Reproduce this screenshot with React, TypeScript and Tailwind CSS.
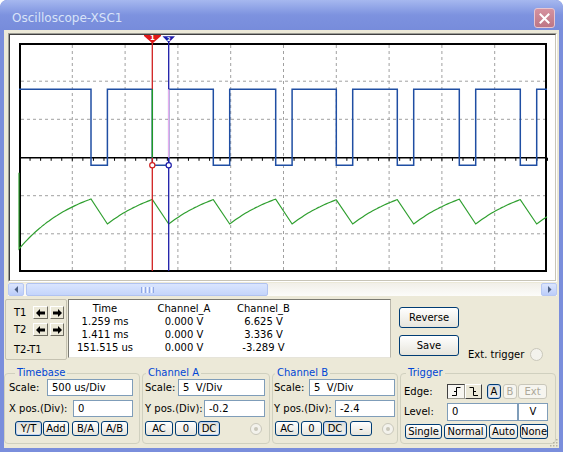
import React from "react";

const X0 = 19;
const X1 = 547;
const HI = 89.3;
const LO = 165.3;
const PULSES = [91, 152.3, 213.3, 275.7, 336.3, 397.3, 459.3, 520.3];
const PW = 16.4;

function squarePath(): string {
  let d = `M${X0} ${HI}`;
  for (const p of PULSES) d += ` H${p} V${LO} H${(p + PW).toFixed(1)} V${HI}`;
  return d + ` H${X1}`;
}

function sawPath(): string {
  let d = "M19 172.7 L19 249";
  const rise = (x0: number, y0: number, x1: number) => {
    for (let x = x0 + 2; x < x1; x += 2) {
      const y = 177.5 + (y0 - 177.5) * Math.exp(-(x - x0) / 60);
      d += ` L${x.toFixed(1)} ${y.toFixed(1)}`;
    }
    const y = 177.5 + (y0 - 177.5) * Math.exp(-(x1 - x0) / 60);
    d += ` L${x1.toFixed(1)} ${y.toFixed(1)}`;
  };
  rise(19, 249, PULSES[0]);
  PULSES.forEach((p, i) => {
    const e = p + PW;
    d += ` L${e.toFixed(1)} 224`;
    rise(e, 224, i + 1 < PULSES.length ? PULSES[i + 1] : X1);
  });
  return d;
}

const SQ = squarePath();
const SAW = sawPath();

function Scope() {
  const vx = Array.from({ length: 9 }, (_, i) => 19.5 + 52.8 * (i + 1));
  const hy = [81.2, 119.3, 195.7, 233.8];
  const ticks = Array.from({ length: 51 }, (_, i) => 19.5 + 10.56 * i);
  const rc = 152.3;
  const bc = 168.7;
  return (
    <svg width="545" height="245" viewBox="10 35 545 245" className="block">
      {vx.map((x) => (
        <line key={"v" + x} x1={x} y1={45} x2={x} y2={270} stroke="#a0a0a0" strokeWidth={1} strokeDasharray="3 3" />
      ))}
      {hy.map((y) => (
        <line key={"h" + y} x1={21} y1={y} x2={545} y2={y} stroke="#a0a0a0" strokeWidth={1} strokeDasharray="3 3" />
      ))}
      <line x1={19} y1={157.7} x2={547} y2={157.7} stroke="#000" strokeWidth={1.6} />
      {ticks.map((x) => (
        <line key={"t" + x} x1={x} y1={157.7} x2={x} y2={160.8} stroke="#000" strokeWidth={1} />
      ))}
      <rect x={20} y={44} width={526} height={227} fill="none" stroke="#000" strokeWidth={2} />
      <path d={SAW} fill="none" stroke="#2f9f2f" strokeWidth={1.2} />
      <path d={SQ} fill="none" stroke="#1f4ea3" strokeWidth={1.5} />
      <line x1={rc} y1={42} x2={rc} y2={HI} stroke="#d01f1f" strokeWidth={1.3} />
      <line x1={rc} y1={HI} x2={rc} y2={157.7} stroke="#1f9f1f" strokeWidth={1.3} />
      <line x1={rc} y1={157.7} x2={rc} y2={271} stroke="#d01f1f" strokeWidth={1.3} />
      <line x1={bc} y1={42} x2={bc} y2={HI} stroke="#1c1ca8" strokeWidth={1.3} />
      <line x1={bc} y1={HI} x2={bc} y2={157.7} stroke="#f2b4f2" strokeWidth={1.3} />
      <line x1={bc} y1={157.7} x2={bc} y2={271} stroke="#1c1ca8" strokeWidth={1.3} />
      <circle cx={rc} cy={LO} r={2.6} fill="#fff" stroke="#d01f1f" strokeWidth={1.2} />
      <circle cx={bc} cy={LO} r={2.6} fill="#fff" stroke="#1c1ca8" strokeWidth={1.2} />
      <polygon points="144,34 161,34 161,36 152.5,43.5 144,36" fill="#e01a1a" />
      <text x={152.5} y={40.3} fontSize={7} fontWeight="bold" fill="#fff" textAnchor="middle" fontFamily="DejaVu Sans, sans-serif">
        1
      </text>
      <polygon points="162.5,36.3 175,36.3 168.7,42.8" fill="#1c1ca8" />
      <text x={168.7} y={40.5} fontSize={5} fontWeight="bold" fill="#fff" textAnchor="middle" fontFamily="DejaVu Sans, sans-serif">
        2
      </text>
    </svg>
  );
}

function TitleBar() {
  return (
    <div className="h-[30px] shrink-0 flex items-center pl-[12px] pr-[8px] pt-[6px] rounded-t-[7px] bg-linear-to-b from-[#a6b8ef] via-[#7d92df] to-[#778cdb]">
      <span className="flex-1 text-[12px] leading-[14px] text-[#d9e3f8]">Oscilloscope-XSC1</span>
      <div className="w-[21px] h-[20px] rounded-[3px] border border-[#e8c6d0] bg-linear-to-b from-[#d5929f] to-[#bd7686] flex items-center justify-center">
        <svg width="11" height="11" viewBox="0 0 11 11">
          <path d="M1.5 1.5 L9.5 9.5 M9.5 1.5 L1.5 9.5" stroke="#ffffff" strokeWidth={2} strokeLinecap="square" />
        </svg>
      </div>
    </div>
  );
}

function ScopeFrame() {
  return (
    <div className="ml-[4px] mt-[3px] w-[549px] h-[249px] shrink-0 border border-t-[#9d9d95] border-l-[#9d9d95] border-r-[#ffffff] border-b-[#ffffff]">
      <div className="w-full h-full border border-t-[#404040] border-l-[#404040] border-r-[#c8c5b8] border-b-[#c8c5b8] bg-white">
        <Scope />
      </div>
    </div>
  );
}

function ScrollBtn({ dir }: { dir: "l" | "r" }) {
  return (
    <div className="w-[16px] h-full rounded-[2px] border border-[#b7c8f3] bg-linear-to-b from-[#dbe5fd] to-[#bccdf9] flex items-center justify-center">
      <svg width="5" height="7" viewBox="0 0 5 7">
        {dir === "l" ? <polygon points="4,0 4,7 0.5,3.5" fill="#4d6185" /> : <polygon points="1,0 1,7 4.5,3.5" fill="#4d6185" />}
      </svg>
    </div>
  );
}

function ScrollBar() {
  return (
    <div className="ml-[4px] mt-[1px] w-[549px] h-[13px] shrink-0 flex bg-linear-to-b from-[#f1efe8] to-[#fcfcfa]">
      <ScrollBtn dir="l" />
      <div className="ml-[2px] w-[242px] h-full rounded-[2px] border border-[#b1c3f0] bg-linear-to-b from-[#dae5fe] to-[#c4d5fb] flex items-center justify-center gap-[1px]">
        <span className="w-[1px] h-[6px] bg-[#8fa7e6]" />
        <span className="w-[1px] h-[6px] bg-[#f4f7ff]" />
        <span className="w-[1px] h-[6px] bg-[#8fa7e6]" />
        <span className="w-[1px] h-[6px] bg-[#f4f7ff]" />
        <span className="w-[1px] h-[6px] bg-[#8fa7e6]" />
        <span className="w-[1px] h-[6px] bg-[#f4f7ff]" />
        <span className="w-[1px] h-[6px] bg-[#8fa7e6]" />
      </div>
      <div className="flex-1" />
      <ScrollBtn dir="r" />
    </div>
  );
}

function ArrowBtn({ dir, className }: { dir: "l" | "r"; className: string }) {
  return (
    <div className={`h-full flex items-center justify-center bg-[#ece9d8] border border-t-[#ffffff] border-l-[#ffffff] border-r-[#716f64] border-b-[#716f64] ${className}`}>
      <svg width="9" height="8" viewBox="0 0 9 8">
        {dir === "l" ? (
          <path d="M0 4 L4 0 L4 2.5 L9 2.5 L9 5.5 L4 5.5 L4 8 Z" fill="#000" />
        ) : (
          <path d="M9 4 L5 0 L5 2.5 L0 2.5 L0 5.5 L5 5.5 L5 8 Z" fill="#000" />
        )}
      </svg>
    </div>
  );
}

function XBtn({ className, children, variant = "n" }: { className: string; children: React.ReactNode; variant?: "n" | "s" | "d" }) {
  const v =
    variant === "d"
      ? "border-[#c9c7ba] text-[#aca899] bg-[#f6f5ef]"
      : variant === "s"
      ? "border-[#003c74] bg-linear-to-b from-[#e2e0d4] to-[#f3f2ec] shadow-[inset_0_0_0_1px_#c3d3f3]"
      : "border-[#003c74] bg-linear-to-b from-[#ffffff] to-[#e7e5dc]";
  return (
    <div className={`flex items-center justify-center rounded-[3px] border whitespace-nowrap ${v} ${className}`}>{children}</div>
  );
}

function Field({ className, children, center }: { className: string; children: React.ReactNode; center?: boolean }) {
  return (
    <div
      className={`h-full flex items-center border border-[#7f9db9] bg-white whitespace-pre ${center ? "justify-center" : "pl-[4px]"} ${className}`}
    >
      {children}
    </div>
  );
}

function Radio({ dot, className }: { dot?: boolean; className: string }) {
  return (
    <div className={`rounded-full border border-[#c9c7ba] bg-[#f3f2ec] flex items-center justify-center ${className}`}>
      {dot ? <div className="w-[4px] h-[4px] rounded-full bg-[#c9c7ba]" /> : null}
    </div>
  );
}

function ReadoutRow() {
  const rows = [
    ["Time", "Channel_A", "Channel_B"],
    ["1.259 ms", "0.000 V", "6.625 V"],
    ["1.411 ms", "0.000 V", "3.336 V"],
    ["151.515 us", "0.000 V", "-3.289 V"],
  ];
  return (
    <div className="mt-[3px] h-[61px] shrink-0 flex items-start">
      <div className="ml-[1px] w-[62px] h-[61px] border border-[#c5c2b1] rounded-[2px] flex flex-col pl-[8px]">
        <div className="mt-[6px] h-[13px] flex items-center">
          <span className="w-[19px]">T1</span>
          <ArrowBtn dir="l" className="w-[15px]" />
          <ArrowBtn dir="r" className="ml-[2px] w-[14px]" />
        </div>
        <div className="mt-[4px] h-[13px] flex items-center">
          <span className="w-[19px]">T2</span>
          <ArrowBtn dir="l" className="w-[15px]" />
          <ArrowBtn dir="r" className="ml-[2px] w-[14px]" />
        </div>
        <div className="mt-[8px] h-[12px] flex items-center">T2-T1</div>
      </div>
      <div className="ml-[1px] w-[323px] h-[59px] bg-white border border-t-[#7a7a72] border-l-[#7a7a72] border-r-[#b9b7ab] border-b-[#e6e4da] pt-[2px]">
        {rows.map((r, i) => (
          <div key={i} className="grid grid-cols-[72px_86px_73px] leading-[13px]">
            <span className="text-center whitespace-nowrap">{r[0]}</span>
            <span className="text-center whitespace-nowrap">{r[1]}</span>
            <span className="text-center whitespace-nowrap">{r[2]}</span>
          </div>
        ))}
      </div>
      <div className="ml-[8px] w-[60px] flex flex-col">
        <XBtn className="mt-[8px] w-[60px] h-[21px]">Reverse</XBtn>
        <XBtn className="mt-[7px] w-[60px] h-[21px]">Save</XBtn>
      </div>
      <div className="ml-[9px] mt-[49px] h-[13px] flex items-center">
        <span>Ext. trigger</span>
        <Radio className="ml-[6px] w-[13px] h-[13px]" />
      </div>
    </div>
  );
}

function ControlsRow() {
  return (
    <div className="mt-[7px] h-[77px] shrink-0 flex items-start">
      <fieldset className="h-[77px] w-[136px] min-w-0 border border-[#d0d0bf] rounded-[4px] pl-[4px]">
        <legend className="ml-[6px] px-[2px] text-[#0046d5] leading-[12px]">Timebase</legend>
        <div className="h-[17px] flex items-center">
          <span className="w-[38px]">Scale:</span>
          <Field className="w-[86px]">500 us/Div</Field>
        </div>
        <div className="mt-[4px] h-[17px] flex items-center">
          <span className="w-[64px] whitespace-nowrap">X pos.(Div):</span>
          <Field className="w-[60px]">0</Field>
        </div>
        <div className="mt-[4px] h-[15px] flex">
          <XBtn variant="s" className="h-full ml-[6px] w-[27px]">Y/T</XBtn>
          <XBtn className="h-full ml-[1px] w-[26px]">Add</XBtn>
          <XBtn className="h-full ml-[3px] w-[27px]">B/A</XBtn>
          <XBtn className="h-full ml-[2px] w-[27px]">A/B</XBtn>
        </div>
      </fieldset>
      <fieldset className="ml-[2px] h-[77px] w-[128px] min-w-0 border border-[#d0d0bf] rounded-[4px] pl-[2px]">
        <legend className="ml-[1px] px-[2px] text-[#0046d5] leading-[12px]">Channel A</legend>
        <div className="h-[17px] flex items-center">
          <span className="w-[33px]">Scale:</span>
          <Field className="w-[87px]">5  V/Div</Field>
        </div>
        <div className="mt-[4px] h-[17px] flex items-center">
          <span className="w-[59px] whitespace-nowrap">Y pos.(Div):</span>
          <Field className="w-[61px]">-0.2</Field>
        </div>
        <div className="mt-[4px] h-[15px] flex items-center">
          <XBtn className="h-full w-[28px]">AC</XBtn>
          <XBtn className="h-full ml-[2px] w-[22px]">0</XBtn>
          <XBtn variant="s" className="h-full ml-[1px] w-[22px]">DC</XBtn>
          <Radio dot className="ml-[30px] w-[12px] h-[12px]" />
        </div>
      </fieldset>
      <fieldset className="ml-[2px] h-[77px] w-[126px] min-w-0 border border-[#d0d0bf] rounded-[4px] pl-[1px]">
        <legend className="ml-[1px] px-[2px] text-[#0046d5] leading-[12px]">Channel B</legend>
        <div className="h-[17px] flex items-center">
          <span className="w-[35px]">Scale:</span>
          <Field className="w-[86px]">5  V/Div</Field>
        </div>
        <div className="mt-[4px] h-[17px] flex items-center">
          <span className="w-[61px] whitespace-nowrap">Y pos.(Div):</span>
          <Field className="w-[60px]">-2.4</Field>
        </div>
        <div className="mt-[4px] h-[15px] flex items-center">
          <XBtn className="h-full ml-[1px] w-[24px]">AC</XBtn>
          <XBtn className="h-full ml-[2px] w-[21px]">0</XBtn>
          <XBtn variant="s" className="h-full ml-[1px] w-[24px]">DC</XBtn>
          <XBtn className="h-full ml-[3px] w-[22px]">-</XBtn>
          <Radio dot className="ml-[10px] w-[12px] h-[12px]" />
        </div>
      </fieldset>
      <fieldset className="ml-[2px] h-[77px] w-[156px] min-w-0 border border-[#d0d0bf] rounded-[4px] pl-[3px]">
        <legend className="ml-[2px] px-[2px] text-[#0046d5] leading-[12px]">Trigger</legend>
        <div className="mt-[5px] h-[15px] flex items-center">
          <span className="w-[43px]">Edge:</span>
          <div className="w-[18px] h-full flex items-center justify-center bg-[#f7f6f1] border border-t-[#404040] border-l-[#404040] border-r-[#9d9b90] border-b-[#9d9b90]">
            <svg width="10" height="9" viewBox="0 0 10 9">
              <path d="M1 8.5 H5.5 V0.5 H9.5 M3 4.5 H5.5" stroke="#000" strokeWidth={1} fill="none" />
            </svg>
          </div>
          <div className="w-[17px] h-full flex items-center justify-center bg-[#ece9d8] border border-t-[#ffffff] border-l-[#ffffff] border-r-[#404040] border-b-[#404040]">
            <svg width="10" height="9" viewBox="0 0 10 9">
              <path d="M0.5 0.5 H4.5 V8.5 H9 M4.5 4.5 H7" stroke="#000" strokeWidth={1} fill="none" />
            </svg>
          </div>
          <XBtn variant="s" className="h-full ml-[5px] w-[14px]">A</XBtn>
          <XBtn variant="d" className="h-full ml-[2px] w-[14px]">B</XBtn>
          <XBtn variant="d" className="h-full ml-[1px] w-[29px]">Ext</XBtn>
        </div>
        <div className="mt-[4px] h-[18px] flex items-center">
          <span className="w-[43px]">Level:</span>
          <Field className="w-[71px]">0</Field>
          <Field center className="w-[30px]">V</Field>
        </div>
        <div className="mt-[3px] h-[15px] flex items-center">
          <XBtn className="h-full ml-[1px] w-[37px]">Single</XBtn>
          <XBtn className="h-full ml-[2px] w-[43px]">Normal</XBtn>
          <XBtn className="h-full ml-[2px] w-[29px]">Auto</XBtn>
          <XBtn className="h-full ml-[2px] w-[28px]">None</XBtn>
        </div>
      </fieldset>
    </div>
  );
}

function Grip() {
  return (
    <svg className="absolute right-[1px] bottom-[1px]" width="10" height="10" viewBox="0 0 10 10">
      {[
        [8, 2],
        [5, 5],
        [8, 5],
        [2, 8],
        [5, 8],
        [8, 8],
      ].map(([x, y], i) => (
        <rect key={i} x={x} y={y} width={1.5} height={1.5} fill="#b6b3a3" />
      ))}
    </svg>
  );
}

export default function App() {
  return (
    <div className="w-[563px] h-[452px] flex flex-col rounded-t-[7px] bg-[#7a8edc] overflow-hidden font-['DejaVu_Sans',sans-serif] text-[10px] leading-[12px] text-black">
      <TitleBar />
      <div className="relative flex-1 mx-[4px] mb-[4px] bg-[#ece9d8] flex flex-col">
        <ScopeFrame />
        <ScrollBar />
        <ReadoutRow />
        <ControlsRow />
        <Grip />
      </div>
    </div>
  );
}
